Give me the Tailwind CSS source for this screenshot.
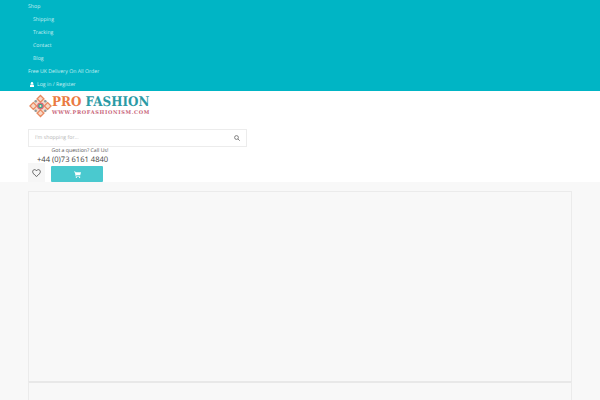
<!DOCTYPE html>
<html lang="en">
  <head>
    <meta charset="UTF-8">
    <title>Pro Fashion</title>
    <script src="https://cdn.jsdelivr.net/npm/@tailwindcss/browser@4"></script>
  </head>
  <body class="bg-white font-['Open_Sans',sans-serif] [text-rendering:geometricPrecision] h-[400px] w-[600px] overflow-hidden">
    <div class="h-[91px] bg-[#00b5c5] pl-[28px] text-[5.2px] text-[#c8eff3]">
      <div class="h-[13px] leading-[13px]">Shop</div>
      <div class="h-[13px] leading-[13px] pl-[5px]">Shipping</div>
      <div class="h-[13px] leading-[13px] pl-[5px]">Tracking</div>
      <div class="h-[13px] leading-[13px] pl-[5px]">Contact</div>
      <div class="h-[13px] leading-[13px] pl-[5px]">Blog</div>
      <div class="h-[13px] leading-[13px]">Free UK Delivery On All Order</div>
      <div class="h-[13px] leading-[13px] flex items-center pl-[2px] gap-[3px]">
        <svg class="w-[4px] h-[5px]" viewBox="0 0 8 10" fill="#ffffff"><circle cx="4" cy="2.6" r="2.4"/><path d="M0 10V7.5C0 6 1.2 5 2.4 5h3.2C6.8 5 8 6 8 7.5V10z"/></svg>
        <span>Log in / Register</span>
      </div>
    </div>
    <div class="h-[91px] pl-[28px] pt-[2px]">
      <div class="flex items-center h-[25px] pl-[1px]">
        <svg class="w-[23px] h-[24px]" viewBox="0 0 24 24">
          <path d="M12 .5L23.5 12 12 23.5.5 12z" fill="#f6d9c8"/>
          <g fill="none" stroke="#e9885f" stroke-width="1.3">
            <path d="M12 1l3.5 3.5L12 8 8.500 4.500zM12 16l3.500 3.500L12 23l-3.500-3.500zM1 12l3.500-3.500L8 12l-3.500 3.500zM16 12l3.500-3.500L23 12l-3.500 3.500z"/>
          </g>
          <g fill="#8f9a9c">
            <circle cx="7" cy="7" r="1.300"/><circle cx="17" cy="7" r="1.300"/><circle cx="7" cy="17" r="1.300"/><circle cx="17" cy="17" r="1.300"/>
          </g>
          <circle cx="12" cy="12" r="3.600" fill="#d9687a"/>
          <circle cx="12" cy="12" r="2.400" fill="#3fa98f"/>
          <circle cx="12" cy="12" r="1" fill="#f4e7c8"/>
        </svg>
        <div class="flex flex-col w-[98px]">
          <div class="font-['DejaVu_Serif_Condensed','DejaVu_Serif',serif] font-bold text-[13.3px] leading-[15px] whitespace-nowrap"><span class="text-[#ea7a42]">PRO</span> <span class="text-[#2a9aa5]">FASHION</span></div>
          <div class="font-['DejaVu_Serif',serif] font-bold text-[5px] leading-[7px] tracking-[0.67px] whitespace-nowrap text-[#c8657a]">WWW.PROFASHIONISM.COM</div>
        </div>
      </div>
      <div class="mt-[11px] w-[219px] h-[18px] border border-[#ececec] flex items-center justify-between pl-[6px] pr-[6px] text-[5.2px] text-[#b5b5b5]">
        <span>I'm shopping for...</span>
        <svg class="w-[6px] h-[6px]" viewBox="0 0 12 12" fill="none" stroke="#666666" stroke-width="1.6"><circle cx="5" cy="5" r="3.8"/><path d="M8 8l3.5 3.5"/></svg>
      </div>
      <div class="pl-[23.5px] text-[5.2px] leading-[7px] text-[#555555]">Got a question? Call Us!</div>
      <div class="pl-[9px] text-[7.6px] leading-[12px] text-[#444444]">+44 (0)73 6161 4840</div>
      <div class="flex items-end gap-[6px] mt-[-3px]">
        <div class="w-[17px] h-[19px] bg-[#f6f6f6] flex items-center justify-center">
          <svg class="w-[9px] h-[8px]" viewBox="0 0 24 22" fill="none" stroke="#444444" stroke-width="2.2"><path d="M12 20.5C5 15 1.5 11.5 1.5 7.2 1.5 4 4 1.7 6.8 1.7c2.1 0 4 1.1 5.2 3.1 1.2-2 3.1-3.1 5.2-3.1 2.8 0 5.3 2.3 5.3 5.5 0 4.3-3.5 7.8-10.5 13.3z"/></svg>
        </div>
        <div class="w-[52px] h-[16px] bg-[#4ac9cf] rounded-[1px] flex items-center justify-center">
          <svg class="w-[7px] h-[7px]" viewBox="0 0 12 12" fill="#ffffff"><path d="M0 1h2.2l.4 1.2H12l-1.3 5.2H3.6l.3 1h6.6v1H3l-1.6-7.4H0z"/><circle cx="4" cy="10.8" r="1.1"/><circle cx="9.6" cy="10.8" r="1.1"/></svg>
        </div>
      </div>
    </div>
    <div class="h-[218px] bg-[#f8f8f8] px-[28px] pt-[9px]">
      <div class="h-[190px] border border-[#ebebeb] border-b-0"></div>
      <div class="h-[20px] border border-[#ebebeb] border-t-2 border-t-[#e8e8e8]"></div>
    </div>
  </body>
</html>
